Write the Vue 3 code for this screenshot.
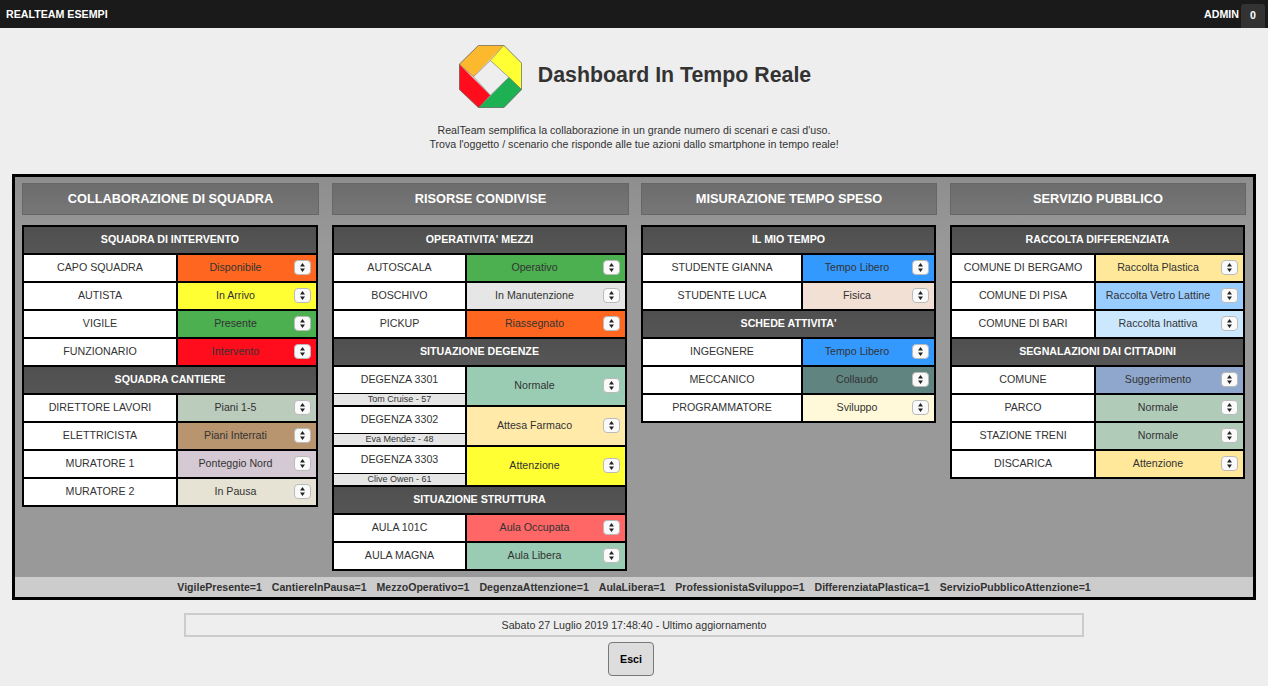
<script setup>
const columns = [
  {
    title: 'COLLABORAZIONE DI SQUADRA',
    cols: '152px 138px',
    sections: [
      { title: 'SQUADRA DI INTERVENTO', rows: [
        { label: 'CAPO SQUADRA', value: 'Disponibile', color: '#ff6720' },
        { label: 'AUTISTA', value: 'In Arrivo', color: '#ffff33' },
        { label: 'VIGILE', value: 'Presente', color: '#4caf50' },
        { label: 'FUNZIONARIO', value: 'Intervento', color: '#ff0d1c' },
      ] },
      { title: 'SQUADRA CANTIERE', rows: [
        { label: 'DIRETTORE LAVORI', value: 'Piani 1-5', color: '#bbccbd' },
        { label: 'ELETTRICISTA', value: 'Piani Interrati', color: '#b8946f' },
        { label: 'MURATORE 1', value: 'Ponteggio Nord', color: '#d5cad4' },
        { label: 'MURATORE 2', value: 'In Pausa', color: '#e6e3d4' },
      ] },
    ],
  },
  {
    title: 'RISORSE CONDIVISE',
    cols: '131px 158px',
    sections: [
      { title: "OPERATIVITA' MEZZI", rows: [
        { label: 'AUTOSCALA', value: 'Operativo', color: '#4caf50' },
        { label: 'BOSCHIVO', value: 'In Manutenzione', color: '#e6e6e6' },
        { label: 'PICKUP', value: 'Riassegnato', color: '#ff6720' },
      ] },
      { title: 'SITUAZIONE DEGENZE', rows: [
        { label: 'DEGENZA 3301', sub: 'Tom Cruise - 57', value: 'Normale', color: '#99ccb3' },
        { label: 'DEGENZA 3302', sub: 'Eva Mendez - 48', value: 'Attesa Farmaco', color: '#ffeaaa' },
        { label: 'DEGENZA 3303', sub: 'Clive Owen - 61', value: 'Attenzione', color: '#ffff33' },
      ] },
      { title: 'SITUAZIONE STRUTTURA', rows: [
        { label: 'AULA 101C', value: 'Aula Occupata', color: '#ff6666' },
        { label: 'AULA MAGNA', value: 'Aula Libera', color: '#99ccb3' },
      ] },
    ],
  },
  {
    title: 'MISURAZIONE TEMPO SPESO',
    cols: '158px 131px',
    sections: [
      { title: 'IL MIO TEMPO', rows: [
        { label: 'STUDENTE GIANNA', value: 'Tempo Libero', color: '#3399ff' },
        { label: 'STUDENTE LUCA', value: 'Fisica', color: '#f3e0d4' },
      ] },
      { title: "SCHEDE ATTIVITA'", rows: [
        { label: 'INGEGNERE', value: 'Tempo Libero', color: '#3399ff' },
        { label: 'MECCANICO', value: 'Collaudo', color: '#608480' },
        { label: 'PROGRAMMATORE', value: 'Sviluppo', color: '#fff9d9' },
      ] },
    ],
  },
  {
    title: 'SERVIZIO PUBBLICO',
    cols: '142px 147px',
    sections: [
      { title: 'RACCOLTA DIFFERENZIATA', rows: [
        { label: 'COMUNE DI BERGAMO', value: 'Raccolta Plastica', color: '#ffe899' },
        { label: 'COMUNE DI PISA', value: 'Raccolta Vetro Lattine', color: '#99ccff' },
        { label: 'COMUNE DI BARI', value: 'Raccolta Inattiva', color: '#cce8ff' },
      ] },
      { title: 'SEGNALAZIONI DAI CITTADINI', rows: [
        { label: 'COMUNE', value: 'Suggerimento', color: '#8fa7cc' },
        { label: 'PARCO', value: 'Normale', color: '#b1cbb9' },
        { label: 'STAZIONE TRENI', value: 'Normale', color: '#b1cbb9' },
        { label: 'DISCARICA', value: 'Attenzione', color: '#ffe899' },
      ] },
    ],
  },
]

const counters = [
  'VigilePresente=1', 'CantiereInPausa=1', 'MezzoOperativo=1', 'DegenzaAttenzione=1',
  'AulaLibera=1', 'ProfessionistaSviluppo=1', 'DifferenziataPlastica=1', 'ServizioPubblicoAttenzione=1',
]
</script>

<template>
  <div class="page">
    <header class="topbar">
      <span class="brand">REALTEAM ESEMPI</span>
      <div class="user">
        <span>ADMIN</span>
        <span class="badge">0</span>
      </div>
    </header>

    <div class="hero">
      <svg class="logo" viewBox="57 46 187 187" width="63" height="63">
        <path d="M58 103 115 47H190L100 140Z" fill="#fdb92e" />
        <path d="M190 47 243 100V178L205 142 150 92Z" fill="#ffff33" />
        <path d="M243 178 190 232H115L205 142Z" fill="#1db153" />
        <path d="M58 103 150 195 115 232 58 178Z" fill="#ff0d1c" />
        <path d="M115 47H190L243 100V178L190 232H115L58 178V103Z" fill="none" stroke="#666" stroke-width="2.5" />
        <path d="M150 92 205 142 150 195 100 140Z" fill="#eee" stroke="#555" stroke-width="1.5" />
        <path d="M58 103 100 140M190 47 150 92M243 178 205 142M115 232 150 195" stroke="#555" stroke-width="1.5" fill="none" />
      </svg>
      <h1 class="title">Dashboard In Tempo Reale</h1>
    </div>

    <p class="intro">
      RealTeam semplifica la collaborazione in un grande numero di scenari e casi d'uso.<br />
      Trova l'oggetto / scenario che risponde alle tue azioni dallo smartphone in tempo reale!
    </p>

    <main class="frame">
      <div class="columns">
        <section v-for="col in columns" :key="col.title" class="column">
          <h2 class="col-title">{{ col.title }}</h2>
          <div class="card" :style="{ gridTemplateColumns: col.cols }">
            <template v-for="sec in col.sections" :key="sec.title">
              <h3 class="sec-title">{{ sec.title }}</h3>
              <template v-for="row in sec.rows" :key="row.label">
                <div class="label" :class="{ tall: row.sub }">
                  <div class="label-main">{{ row.label }}</div>
                  <div v-if="row.sub" class="label-sub">{{ row.sub }}</div>
                </div>
                <div class="value" :style="{ background: row.color }">
                  <span class="value-text">{{ row.value }}</span>
                  <span class="stepper">
                    <svg viewBox="0 0 5 9" width="5" height="9">
                      <path d="M2.5 0 5 3.4H0ZM2.5 9 0 5.6H5Z" fill="#222" />
                    </svg>
                  </span>
                </div>
              </template>
            </template>
          </div>
        </section>
      </div>
      <div class="counters">
        <span v-for="c in counters" :key="c">{{ c }}</span>
      </div>
    </main>

    <div class="status">Sabato 27 Luglio 2019 17:48:40 - Ultimo aggiornamento</div>
    <div class="actions">
      <button class="exit" type="button">Esci</button>
    </div>
  </div>
</template>

<style>
html, body {
  margin: 0;
  background: #eee;
}
</style>

<style scoped>
.page {
  width: 1268px;
  height: 686px;
  overflow: hidden;
  background: #eee;
  color: #333;
  font-family: "Liberation Sans", Arial, sans-serif;
  font-size: 10.66px;
}

.topbar {
  height: 28px;
  box-sizing: border-box;
  background: #1a1a1a;
  color: #fff;
  font-weight: 700;
  font-size: 10.66px;
  display: flex;
  justify-content: space-between;
  padding: 0 3px 0 6px;
}
.brand {
  line-height: 29px;
}
.user {
  display: flex;
  gap: 2px;
  line-height: 29px;
}
.badge {
  width: 24px;
  height: 24px;
  margin-top: 4px;
  border-radius: 3px 3px 0 0;
  background: #333;
  text-align: center;
  line-height: 22px;
}

.hero {
  display: flex;
  justify-content: center;
  align-items: center;
  gap: 16px;
  padding: 17px 0 0 2px;
  height: 63px;
}
.logo {
  display: block;
  flex: none;
}
.title {
  margin: 0 0 4px;
  font-size: 21.33px;
  line-height: 26px;
  font-weight: 700;
  color: #333;
}

.intro {
  margin: 15px 0 0;
  text-align: center;
  font-size: 10.66px;
  line-height: 14px;
  height: 28px;
}

.frame {
  width: 1238px;
  height: 420px;
  margin: 23px 0 0 12px;
  border: 3px solid #000;
  background: linear-gradient(#8e8e8e, #999 70px);
  display: flex;
  flex-direction: column;
  justify-content: space-between;
}
.columns {
  display: grid;
  grid-template-columns: 310px 309px 309px 296px;
  justify-content: start;
  padding: 6px 0 0 7px;
}
.column {
  min-width: 0;
  box-sizing: border-box;
  padding-right: 13px;
}
.column:nth-child(2) {
  padding-right: 12px;
}
.column:nth-child(4) {
  padding-right: 0;
}
.col-title {
  margin: 0 0 10px;
  height: 32px;
  box-sizing: border-box;
  border: 1px solid #666;
  background: linear-gradient(#6c6c6c, #777);
  color: #fff;
  font-size: 12.8px;
  line-height: 29px;
  font-weight: 700;
  text-align: center;
}

.card {
  display: inline-grid;
  gap: 2px;
  border: 2px solid #000;
  background: #000;
  vertical-align: top;
}
.sec-title {
  grid-column: 1 / -1;
  margin: 0;
  height: 26px;
  background: linear-gradient(#4f4f4f, #565656);
  color: #fff;
  font-size: 10.66px;
  line-height: 25px;
  font-weight: 700;
  text-align: center;
}
.label {
  background: #fff;
  text-align: center;
  color: #333;
}
.label-main {
  height: 26px;
  line-height: 25px;
}
.tall .label-sub {
  height: 11px;
  margin-top: 1px;
  background: #e6e6e6;
  box-shadow: 0 -1px 0 #000;
  font-size: 9px;
  line-height: 10px;
}
.value {
  position: relative;
  display: flex;
  align-items: center;
  justify-content: center;
  padding: 0 23px 2px 0;
}
.value-text {
  white-space: nowrap;
}
.stepper {
  position: absolute;
  right: 5px;
  top: 50%;
  margin-top: -8px;
  width: 17px;
  height: 15px;
  box-sizing: border-box;
  border: 1px solid #bbb;
  border-radius: 4px;
  background: #fafafa;
  display: flex;
  align-items: center;
  justify-content: center;
}
.stepper svg {
  display: block;
}

.counters {
  height: 20px;
  background: #ccc;
  display: flex;
  justify-content: center;
  gap: 10px;
  font-size: 10.56px;
  font-weight: 700;
  line-height: 20px;
  color: #333;
  white-space: nowrap;
}

.status {
  box-sizing: border-box;
  width: 900px;
  height: 24px;
  margin: 13px 0 0 184px;
  border: 2px solid #ccc;
  text-align: center;
  line-height: 20px;
}
.actions {
  display: flex;
  justify-content: center;
  margin-top: 5px;
  padding-right: 6px;
}
.exit {
  width: 46px;
  height: 34px;
  padding: 0;
  border: 1px solid #777;
  border-radius: 4px;
  background: #ddd;
  color: #000;
  font-family: inherit;
  font-size: 10.66px;
  font-weight: 700;
}
</style>
